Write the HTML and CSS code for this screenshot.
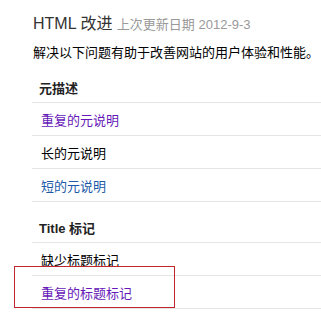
FILE: index.html
```html
<!DOCTYPE html>
<html lang="zh-CN">
<head>
  <meta charset="UTF-8" />
  <title>HTML 改进</title>
  <link rel="stylesheet" href="styles.css">
</head>
<body>

  <div class="pagina">
    <h1 class="titulo">HTML 改进 <span class="atualizado">上次更新日期 2012-9-3</span></h1>
    <p class="descricao">解决以下问题有助于改善网站的用户体验和性能。</p>

    <!-- Metadescrições -->
    <h2 class="secao">元描述</h2>
    <ul class="lista">
      <li><a class="visitado" href="#">重复的元说明</a></li>
      <li><span class="texto">长的元说明</span></li>
      <li><a class="link" href="#">短的元说明</a></li>
    </ul>

    <!-- Title -->
    <h2 class="secao">Title 标记</h2>
    <ul class="lista">
      <li><span class="texto">缺少标题标记</span></li>
      <li><a class="visitado" href="#">重复的标题标记</a></li>
    </ul>
  </div>

  <div class="destaque"></div>

</body>
</html>
```

FILE: styles.css
```css
* {
  box-sizing: border-box;
}

body, html {
  margin: 0; padding: 0;
  background: #fff;
  font-family: 'Liberation Sans', Arial, 'Noto Sans CJK SC', sans-serif;
  color: #222;
  overflow: hidden;
}

.pagina {
  padding-left: 32px;
}

.titulo {
  margin: 14px 0 0 1px;
  font-size: 16px;
  font-weight: normal;
  line-height: 20px;
  color: #333;
}

.atualizado {
  font-size: 13px;
  color: #999;
}

.descricao {
  margin: 9px 0 0 1px;
  font-size: 13px;
  line-height: 18px;
  color: #000;
}

/* cabeçalho de cada grupo */
.secao {
  margin: 0;
  padding: 18px 0 4px 7px;
  font-size: 13px;
  font-weight: bold;
  line-height: 18px;
  color: #222;
  border-bottom: 1px solid #e5e5e5;
}

.lista {
  list-style: none;
  margin: 0;
  padding: 0;
}

.lista li {
  height: 33px;
  display: flex;
  align-items: center;
  padding-left: 9px;
  font-size: 13px;
  border-bottom: 1px solid #e5e5e5;
}

.lista a {
  text-decoration: none;
}

.visitado {
  color: #6619b8;
}

.link {
  color: #1c5aa8;
}

.texto {
  color: #000;
}

/* caixa vermelha por cima da última linha */
.destaque {
  position: absolute;
  left: 14px;
  top: 266px;
  width: 161px;
  height: 42px;
  border: 1px solid #c0272d;
}
```
